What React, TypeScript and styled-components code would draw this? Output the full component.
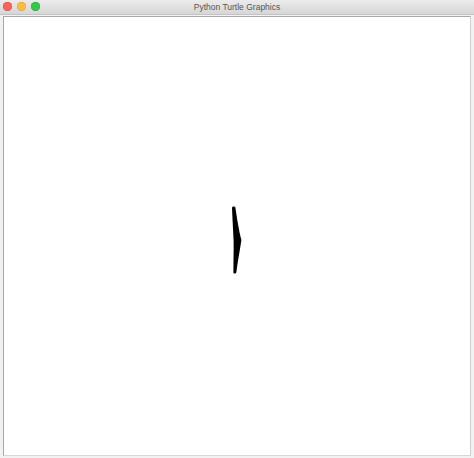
import React from 'react'
import styled, { createGlobalStyle } from 'styled-components'

const GlobalStyle = createGlobalStyle`
    html, body {
        margin: 0;
        padding: 0;
        background: #ececec;
    }
`

const Window = styled.div`
    width: 474px;
    height: 458px;
    display: flex;
    flex-direction: column;
    background: #ececec;
    overflow: hidden;
`

const TitleBar = styled.div`
    position: relative;
    height: 14px;
    display: flex;
    align-items: center;
    justify-content: center;
    background: linear-gradient(#ebebeb, #d6d6d6);
    border-bottom: 1px solid #c4c4c4;
`

const Lights = styled.div`
    position: absolute;
    left: 3px;
    top: 2px;
    display: flex;
    gap: 5px;
`

const Light = styled.span<{ $color: string; $edge: string }>`
    width: 9px;
    height: 9px;
    border-radius: 50%;
    background: ${p => p.$color};
    box-shadow: inset 0 0 0 0.5px ${p => p.$edge};
`

const Title = styled.span`
    font-family: "Liberation Sans", Arial, sans-serif;
    font-size: 8.5px;
    color: #555555;
`

const Body = styled.div`
    flex: 1;
    display: flex;
    padding: 1px 3px 2px 3px;
    background: #f2f2f2;
`

const Canvas = styled.div`
    position: relative;
    flex: 1;
    background: #ffffff;
    border: 1px solid #a8a8a8;
    border-bottom-color: #d8d8d8;
    border-right-color: #cfcfcf;
`

const Turtle = styled.svg`
    position: absolute;
    left: 223px;
    top: 188px;
`

export default function App() {
    return (
        <>
            <GlobalStyle />
            <Window>
                <TitleBar>
                    <Lights>
                        <Light $color="#fc605c" $edge="#de4a46" />
                        <Light $color="#fdbc40" $edge="#dea236" />
                        <Light $color="#34c84a" $edge="#27aa37" />
                    </Lights>
                    <Title>Python Turtle Graphics</Title>
                </TitleBar>
                <Body>
                    <Canvas>
                        <Turtle width="20" height="72" viewBox="0 0 20 72">
                            <path
                                d="M5 2.6 C5.6 1.2 8 1.2 8.4 2.6 C10 14 12 26 14.4 35 C12.8 46 10.6 57 9.4 67 C9 69 6.6 69 6.4 67.4 C6.4 56 6.8 46 6.6 36 C6.2 26 5.4 14 5 2.6 Z"
                                fill="#000000"
                            />
                        </Turtle>
                    </Canvas>
                </Body>
            </Window>
        </>
    )
}
